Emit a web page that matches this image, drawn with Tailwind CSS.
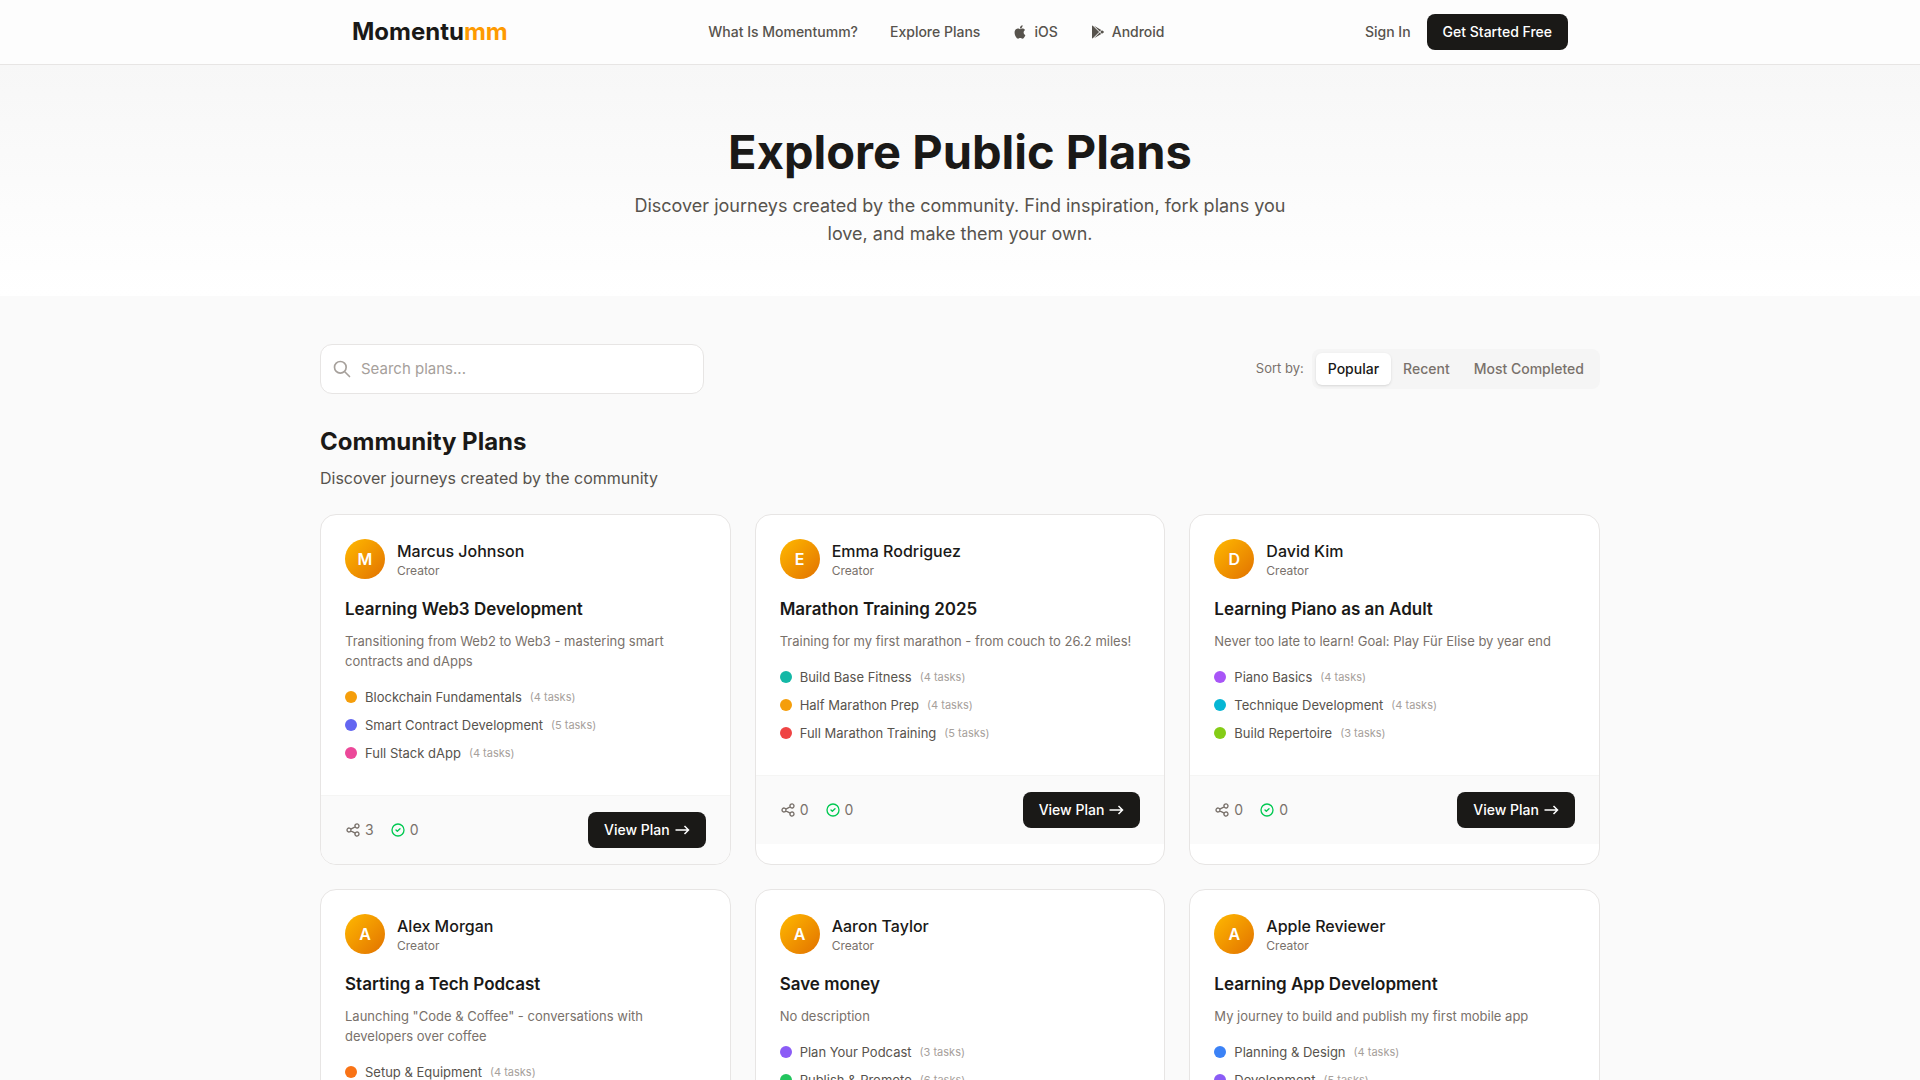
<!DOCTYPE html>
<html lang="en">
  <head>
    <meta charset="UTF-8" />
    <meta name="viewport" content="width=device-width, initial-scale=1.0" />
    <title>Explore Public Plans | Momentumm</title>
    <script src="https://cdn.jsdelivr.net/npm/@tailwindcss/browser@4"></script>
  </head>
  <body class="bg-[#fafafa] font-['Inter','Liberation_Sans',sans-serif] text-[#1a1917]">
    <header class="sticky top-0 z-10 -mb-px border-b border-stone-200 bg-[#fdfdfd]">
      <div class="mx-auto flex h-16 max-w-7xl items-center justify-between px-8">
        <a href="#" class="text-2xl font-bold">Momentu<span class="text-amber-500">mm</span></a>

        <nav class="flex items-center gap-8 text-sm font-medium text-stone-600">
          <a href="#" class="hover:text-stone-900">What Is Momentumm?</a>
          <a href="#" class="hover:text-stone-900">Explore Plans</a>
          <a href="#" class="flex items-center gap-1.5 hover:text-stone-900">
            <svg class="h-4 w-4" viewBox="0 0 24 24" fill="currentColor" aria-hidden="true">
              <path d="M18.71 19.5c-.83 1.24-1.71 2.45-3.05 2.47-1.34.03-1.77-.79-3.29-.79-1.53 0-2 .77-3.27.82-1.31.05-2.3-1.32-3.14-2.53C4.25 17 2.94 12.45 4.7 9.39c.87-1.52 2.43-2.48 4.12-2.51 1.28-.02 2.5.87 3.29.87.78 0 2.26-1.07 3.81-.91.65.03 2.47.26 3.64 1.98-.09.06-2.17 1.28-2.15 3.81.03 3.02 2.65 4.03 2.68 4.04-.03.07-.42 1.44-1.38 2.83M13 3.5c.73-.83 1.94-1.46 2.94-1.5.13 1.17-.34 2.35-1.04 3.19-.69.85-1.83 1.51-2.95 1.42-.15-1.15.41-2.35 1.05-3.11z" />
            </svg>
            iOS
          </a>
          <a href="#" class="flex items-center gap-1.5 hover:text-stone-900">
            <svg class="h-4 w-4" viewBox="0 0 24 24" fill="currentColor" aria-hidden="true">
              <path d="M3 20.5V3.5c0-.59.34-1.11.84-1.35L13.69 12 3.84 21.85c-.5-.25-.84-.76-.84-1.35zM16.81 15.12 6.05 21.34l8.49-8.49 2.27 2.27zM20.16 10.81c.34.27.59.69.59 1.19s-.22.9-.57 1.18L17.89 14.5 15.39 12l2.5-2.5 2.27 1.31zM6.05 2.66l10.76 6.22-2.27 2.27L6.05 2.66z" />
            </svg>
            Android
          </a>
        </nav>

        <div class="flex items-center gap-4 text-sm font-medium">
          <a href="#" class="text-stone-600 hover:text-stone-900">Sign In</a>
          <button type="button" class="rounded-lg bg-[#1a1917] px-4 py-2 text-white hover:bg-stone-800">Get Started Free</button>
        </div>
      </div>
    </header>

    <section class="bg-gradient-to-b from-[#f7f7f7] to-white px-8 pt-16 pb-12 text-center">
      <h1 class="mb-4 text-[47px] leading-12 font-bold">Explore Public Plans</h1>
      <p class="mx-auto max-w-2xl text-lg text-stone-600">
        Discover journeys created by the community. Find inspiration, fork plans you love, and make them your own.
      </p>
    </section>

    <main class="mx-auto max-w-7xl py-12">
      <div class="mb-8 flex items-center justify-between">
        <div class="relative w-full max-w-sm">
          <svg class="absolute top-1/2 left-3 h-5 w-5 -translate-y-1/2 text-stone-400" viewBox="0 0 24 24" fill="none" stroke="currentColor" stroke-width="2" stroke-linecap="round" stroke-linejoin="round" aria-hidden="true">
            <path d="M21 21l-6-6m2-5a7 7 0 11-14 0 7 7 0 0114 0z" />
          </svg>
          <input
            type="text"
            aria-label="Search plans"
            placeholder="Search plans..."
            class="w-full rounded-xl border border-stone-200 bg-white py-3 pr-4 pl-10 text-[15px] leading-6 outline-none placeholder:text-stone-400 focus:border-amber-500"
          />
        </div>
        <div class="flex items-center gap-2">
          <span id="sort-label" class="text-[13px] text-stone-500">Sort by:</span>
          <div role="group" aria-labelledby="sort-label" class="flex rounded-lg bg-[#f5f5f5] p-1 text-sm font-medium text-stone-500">
            <button type="button" class="rounded-md bg-white px-3 py-1.5 text-[#1a1917] shadow-sm">Popular</button>
            <button type="button" class="rounded-md px-3 py-1.5">Recent</button>
            <button type="button" class="rounded-md px-3 py-1.5">Most Completed</button>
          </div>
        </div>
      </div>

      <h2 class="mb-2 text-2xl font-bold">Community Plans</h2>
      <p class="mb-6 text-stone-600">Discover journeys created by the community</p>

      <div id="plans" class="grid grid-cols-1 gap-6 md:grid-cols-2 lg:grid-cols-3"></div>
    </main>

    <script>
      const plans = [
        {
          creator: "Marcus Johnson",
          title: "Learning Web3 Development",
          description: "Transitioning from Web2 to Web3 - mastering smart contracts and dApps",
          forks: 3,
          goals: [
            ["bg-[#f59e0b]", "Blockchain Fundamentals", 4],
            ["bg-[#6366f1]", "Smart Contract Development", 5],
            ["bg-[#ec4899]", "Full Stack dApp", 4],
          ],
        },
        {
          creator: "Emma Rodriguez",
          title: "Marathon Training 2025",
          description: "Training for my first marathon - from couch to 26.2 miles!",
          forks: 0,
          goals: [
            ["bg-[#14b8a6]", "Build Base Fitness", 4],
            ["bg-[#f59e0b]", "Half Marathon Prep", 4],
            ["bg-[#ef4444]", "Full Marathon Training", 5],
          ],
        },
        {
          creator: "David Kim",
          title: "Learning Piano as an Adult",
          description: "Never too late to learn! Goal: Play Für Elise by year end",
          forks: 0,
          goals: [
            ["bg-[#a855f7]", "Piano Basics", 4],
            ["bg-[#06b6d4]", "Technique Development", 4],
            ["bg-[#84cc16]", "Build Repertoire", 3],
          ],
        },
        {
          creator: "Alex Morgan",
          title: "Starting a Tech Podcast",
          description: 'Launching "Code & Coffee" - conversations with developers over coffee',
          forks: 0,
          goals: [["bg-[#f97316]", "Setup & Equipment", 4]],
        },
        {
          creator: "Aaron Taylor",
          title: "Save money",
          description: "No description",
          forks: 0,
          goals: [
            ["bg-[#8b5cf6]", "Plan Your Podcast", 3],
            ["bg-[#22c55e]", "Publish & Promote", 6],
          ],
        },
        {
          creator: "Apple Reviewer",
          title: "Learning App Development",
          description: "My journey to build and publish my first mobile app",
          forks: 0,
          goals: [
            ["bg-[#3b82f6]", "Planning & Design", 4],
            ["bg-[#8b5cf6]", "Development", 5],
          ],
        },
      ];

      const goalRow = ([color, name, tasks]) => `
        <li class="flex items-center gap-2">
          <span class="h-3 w-3 rounded-full ${color}"></span>
          <span class="text-[13px] leading-5 text-stone-600">${name}</span>
          <span class="text-[11px] leading-4 text-stone-400">(${tasks} tasks)</span>
        </li>`;

      const planCard = (plan) => `
        <article class="overflow-hidden rounded-2xl border border-stone-200 bg-white">
          <div class="p-6">
            <div class="mb-4 flex items-center gap-3">
              <div class="flex h-10 w-10 items-center justify-center rounded-full bg-gradient-to-br from-[#ffb900] to-[#e17100] font-semibold text-white">${plan.creator[0]}</div>
              <div>
                <p class="font-medium">${plan.creator}</p>
                <p class="text-xs text-stone-500">Creator</p>
              </div>
            </div>
            <h3 class="mb-2 text-[17px] leading-7 font-semibold">${plan.title}</h3>
            <p class="mb-4 text-[13px] leading-5 text-stone-500">${plan.description}</p>
            <ul class="mb-2 space-y-2">${plan.goals.map(goalRow).join("")}</ul>
          </div>
          <div class="flex items-center justify-between border-t border-stone-100 bg-[#fafafa] px-6 py-4 text-sm">
            <div class="flex items-center gap-4 text-stone-500">
              <span class="flex items-center gap-1">
                <svg class="h-4 w-4" viewBox="0 0 24 24" fill="none" stroke="currentColor" stroke-width="2" stroke-linecap="round" stroke-linejoin="round" aria-hidden="true">
                  <path d="M8.684 13.342C8.886 12.938 9 12.482 9 12c0-.482-.114-.938-.316-1.342m0 2.684a3 3 0 110-2.684m0 2.684l6.632 3.316m-6.632-6l6.632-3.316m0 0a3 3 0 105.367-2.684 3 3 0 00-5.367 2.684zm0 9.316a3 3 0 105.368 2.684 3 3 0 00-5.368-2.684z" />
                </svg>
                ${plan.forks}
              </span>
              <span class="flex items-center gap-1">
                <svg class="h-4 w-4 text-green-500" viewBox="0 0 24 24" fill="none" stroke="currentColor" stroke-width="2" stroke-linecap="round" stroke-linejoin="round" aria-hidden="true">
                  <path d="M9 12l2 2 4-4m6 2a9 9 0 11-18 0 9 9 0 0118 0z" />
                </svg>
                0
              </span>
            </div>
            <a href="#" class="flex items-center gap-1 rounded-lg bg-[#1a1917] px-4 py-2 font-medium text-white hover:bg-stone-800">
              View Plan
              <svg class="h-4 w-4" viewBox="0 0 16 16" fill="none" stroke="currentColor" stroke-width="1.5" aria-hidden="true">
                <path d="M1.5 8h13M10.5 4l4 4-4 4" />
              </svg>
            </a>
          </div>
        </article>`;

      document.getElementById("plans").innerHTML = plans.map(planCard).join("");
    </script>
  </body>
</html>
